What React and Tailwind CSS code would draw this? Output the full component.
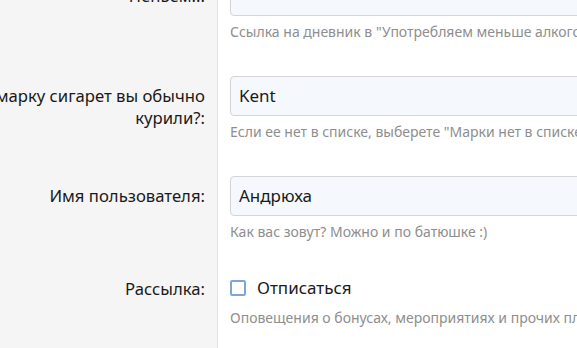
export default function App() {
    const rows = [
        {
            label: "Пеньем..:",
            value: "",
            hint: "Ссылка на дневник в \"Употребляем меньше алкоголя\", если он у вас есть",
        },
        {
            label: (
                <>
                    Какую марку сигарет вы обычно
                    <br />
                    курили?:
                </>
            ),
            value: "Kent",
            hint: "Если ее нет в списке, выберете \"Марки нет в списке\"",
        },
        {
            label: "Имя пользователя:",
            value: "Андрюха",
            hint: "Как вас зовут? Можно и по батюшке :)",
        },
    ];

    return (
        <div
            className="w-[577px] h-[348px] overflow-hidden bg-white text-[#1a1a1a]"
            style={{ fontFamily: '"Noto Sans", "Open Sans", sans-serif' }}
        >
            <div className="flex flex-col h-[372px] -mt-[24px] -ml-[182px] w-[900px]">
                {rows.map((row, i) => (
                    <div key={i} className="flex">
                        <div className="w-[400px] shrink-0 bg-[#f5f5f5] border-r border-[#e2e2e2] pr-3 pt-[9px] text-right text-[16.7px] leading-[22px]">
                            {row.label}
                        </div>
                        <div className="flex-1 pl-3 pb-[34px]">
                            <div className="h-10 rounded border border-[#d5d5d5] bg-[#f5f9fd] px-2 flex items-center text-[17px]">
                                {row.value}
                            </div>
                            <div className="mt-1.5 text-[14px] leading-5 text-[#8e8e8e] whitespace-nowrap">
                                {row.hint}
                            </div>
                        </div>
                    </div>
                ))}

                <div className="flex flex-1">
                    <div className="w-[400px] shrink-0 bg-[#f5f5f5] border-r border-[#e2e2e2] pr-3 pt-[2px] text-right text-[16.7px] leading-[22px]">
                        Рассылка:
                    </div>
                    <div className="flex-1 pl-3">
                        <label className="h-6 flex items-center gap-[11px] text-[17px]">
                            <span className="w-4 h-4 rounded-[2px] border-2 border-[#7ba6da] bg-white" />
                            Отписаться
                        </label>
                        <div className="mt-2 text-[14px] leading-5 text-[#8e8e8e] whitespace-nowrap">
                            Оповещения о бонусах, мероприятиях и прочих плюшках сайта
                        </div>
                    </div>
                </div>
            </div>
        </div>
    );
}
